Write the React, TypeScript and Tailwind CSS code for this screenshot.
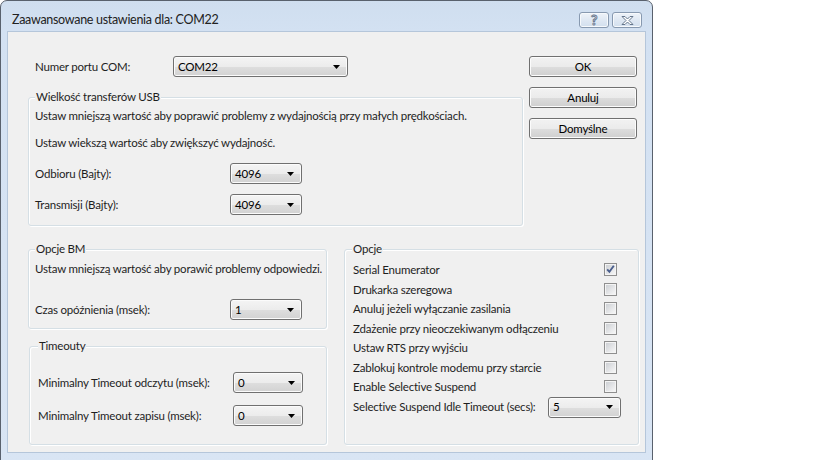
import type { ReactNode } from 'react';

const FONT = "font-['Lato','Segoe_UI',sans-serif]";

function Combo({ value, width }: { value: string; width: string }) {
  return (
    <div
      className={`${width} flex h-[21px] shrink-0 items-center justify-between rounded-[3px] border border-[#707070] bg-[linear-gradient(to_bottom,#f4f4f4_0%,#ececec_50%,#dedede_51%,#d2d2d2_100%)] pl-[4px] pr-[7px] shadow-[inset_0_0_0_1px_#fbfbfb]`}
    >
      <span className="leading-none text-black">{value}</span>
      <svg width="7" height="4" viewBox="0 0 7 4">
        <path d="M0 0H7L3.5 4Z" fill="#000" />
      </svg>
    </div>
  );
}

function Button({ children }: { children: ReactNode }) {
  return (
    <button className="flex h-[21px] w-[108px] items-center justify-center rounded-[3px] border border-[#707070] bg-[linear-gradient(to_bottom,#f2f2f2_0%,#ebebeb_50%,#dddddd_51%,#cfcfcf_100%)] text-black shadow-[inset_0_0_0_1px_#fcfcfc]">
      {children}
    </button>
  );
}

function Group({
  title,
  className,
  legendClass = 'left-[6px]',
  children,
}: {
  title: string;
  className: string;
  legendClass?: string;
  children: ReactNode;
}) {
  return (
    <div
      className={`relative rounded-[3px] border border-[#d5dfe5] shadow-[inset_1px_1px_0_#ffffff,1px_1px_0_#ffffff] ${className}`}
    >
      <span className={`absolute -top-[9px] ${legendClass} bg-[#f0f0f0] px-[1px] leading-[16px]`}>
        {title}
      </span>
      {children}
    </div>
  );
}

function Checkbox({ checked = false }: { checked?: boolean }) {
  return (
    <div className="h-[13px] w-[13px] shrink-0 border border-[#8f8f8f] bg-[#f4f4f4] p-[1px]">
      <div className="relative h-full w-full bg-[linear-gradient(135deg,#cdd0d4_0%,#e6e7e9_60%,#f6f6f6_100%)]">
        {checked && (
          <svg className="absolute -left-[1px] -top-[1px]" width="11" height="11" viewBox="0 0 11 11">
            <path d="M2.2 5.4L4.4 7.8L8.8 1.8" fill="none" stroke="#4a5e8c" strokeWidth="1.9" />
          </svg>
        )}
      </div>
    </div>
  );
}

const options = [
  { label: 'Serial Enumerator', checked: true },
  { label: 'Drukarka szeregowa' },
  { label: 'Anuluj jeżeli wyłączanie zasilania' },
  { label: 'Zdażenie przy nieoczekiwanym odłączeniu' },
  { label: 'Ustaw RTS przy wyjściu' },
  { label: 'Zablokuj kontrole modemu przy starcie' },
  { label: 'Enable Selective Suspend' },
];

export default function App() {
  return (
    <div
      className={`h-[460px] w-[819px] overflow-hidden whitespace-nowrap bg-white ${FONT} text-[11.5px] tracking-[-0.2px] text-[#1e1e1e]`}
    >
      <div className="flex h-[470px] w-[653px] flex-col rounded-t-[7px] border border-[#59616d] bg-[linear-gradient(to_bottom,#cfdeef_0px,#d3e1f2_30px,#d9e5f4_100%)]">
        {/* pasek tytułu */}
        <div className="flex h-[30px] shrink-0 items-start justify-between pl-[11px] pr-[10px]">
          <span className="mt-[10px] text-[12.5px] leading-[18px] tracking-[-0.3px] text-[#222]">
            Zaawansowane ustawienia dla: COM22
          </span>
          <div className="mt-[11px] flex gap-[3px]">
            <div className="flex h-[16px] w-[30px] items-center justify-center rounded-[3px] border border-[#8799b0] bg-[linear-gradient(to_bottom,#eef3f9_0%,#dfe8f3_50%,#d2dfee_100%)] shadow-[inset_0_0_0_1px_#f6f9fc]">
              <span className="text-[14px] font-bold leading-none text-white [-webkit-text-stroke:1px_#6a7a90]">?</span>
            </div>
            <div className="flex h-[16px] w-[30px] items-center justify-center rounded-[3px] border border-[#8799b0] bg-[linear-gradient(to_bottom,#eef3f9_0%,#dfe8f3_50%,#d2dfee_100%)] shadow-[inset_0_0_0_1px_#f6f9fc]">
              <svg width="13" height="9" viewBox="0 0 13 9">
                <path
                  d="M1 0.5H4L6.5 3L9 0.5H12L8 4.5L12 8.5H9L6.5 6L4 8.5H1L5 4.5Z"
                  fill="#ffffff"
                  stroke="#65768c"
                  strokeWidth="1"
                  strokeLinejoin="round"
                />
              </svg>
            </div>
          </div>
        </div>

        {/* obszar klienta */}
        <div className="mx-[6px] h-[422px] shrink-0 border border-[#b5c6da] bg-[#f0f0f0] pl-[20px] pt-[24px]">
          <div className="flex">
            <div className="w-[495px]">
              <div className="flex h-[21px] items-center">
                <span className="w-[145px] pl-[7px]">Numer portu COM:</span>
                <Combo value="COM22" width="w-[175px]" />
              </div>

              <Group title="Wielkość transferów USB" className="mt-[20px] h-[129px] w-[495px] px-[6px] pt-[10px]">
                <p className="leading-[16px]">
                  Ustaw mniejszą wartość aby poprawić problemy z wydajnością przy małych prędkościach.
                </p>
                <p className="mt-[11px] leading-[16px]">Ustaw wiekszą wartość aby zwiększyć wydajność.</p>
                <div className="mt-[12px] flex h-[21px] items-center">
                  <span className="w-[195px]">Odbioru (Bajty):</span>
                  <Combo value="4096" width="w-[72px]" />
                </div>
                <div className="mt-[10px] flex h-[21px] items-center">
                  <span className="w-[195px]">Transmisji (Bajty):</span>
                  <Combo value="4096" width="w-[72px]" />
                </div>
              </Group>
            </div>

            <div className="ml-[6px] flex flex-col gap-[10px]">
              <Button>OK</Button>
              <Button>Anuluj</Button>
              <Button>Domyślne</Button>
            </div>
          </div>

          <div className="mt-[23px] flex">
            <div className="flex w-[299px] flex-col">
              <Group title="Opcje BM" className="h-[80px] px-[6px] pt-[11px]">
                <p className="leading-[16px]">Ustaw mniejszą wartość aby porawić problemy odpowiedzi.</p>
                <div className="mt-[22px] flex h-[21px] items-center">
                  <span className="w-[195px]">Czas opóźnienia (msek):</span>
                  <Combo value="1" width="w-[72px]" />
                </div>
              </Group>

              <Group title="Timeouty" className="ml-[1px] mt-[17px] h-[99px] px-[8px] pt-[25px]" legendClass="left-[8px]">
                <div className="flex h-[21px] items-center">
                  <span className="w-[195px]">Minimalny Timeout odczytu (msek):</span>
                  <Combo value="0" width="w-[70px]" />
                </div>
                <div className="mt-[12px] flex h-[21px] items-center">
                  <span className="w-[195px]">Minimalny Timeout zapisu (msek):</span>
                  <Combo value="0" width="w-[70px]" />
                </div>
              </Group>
            </div>

            <Group title="Opcje" className="ml-[17px] h-[196px] w-[295px] pl-[8px] pt-[10px]" legendClass="left-[7px]">
              {options.map((o) => (
                <div key={o.label} className="flex h-[19.5px] items-center">
                  <span className="w-[251px]">{o.label}</span>
                  <Checkbox checked={o.checked} />
                </div>
              ))}
              <div className="flex h-[21px] items-center">
                <span className="w-[195px]">Selective Suspend Idle Timeout (secs):</span>
                <Combo value="5" width="w-[73px]" />
              </div>
            </Group>
          </div>
        </div>
      </div>
    </div>
  );
}
